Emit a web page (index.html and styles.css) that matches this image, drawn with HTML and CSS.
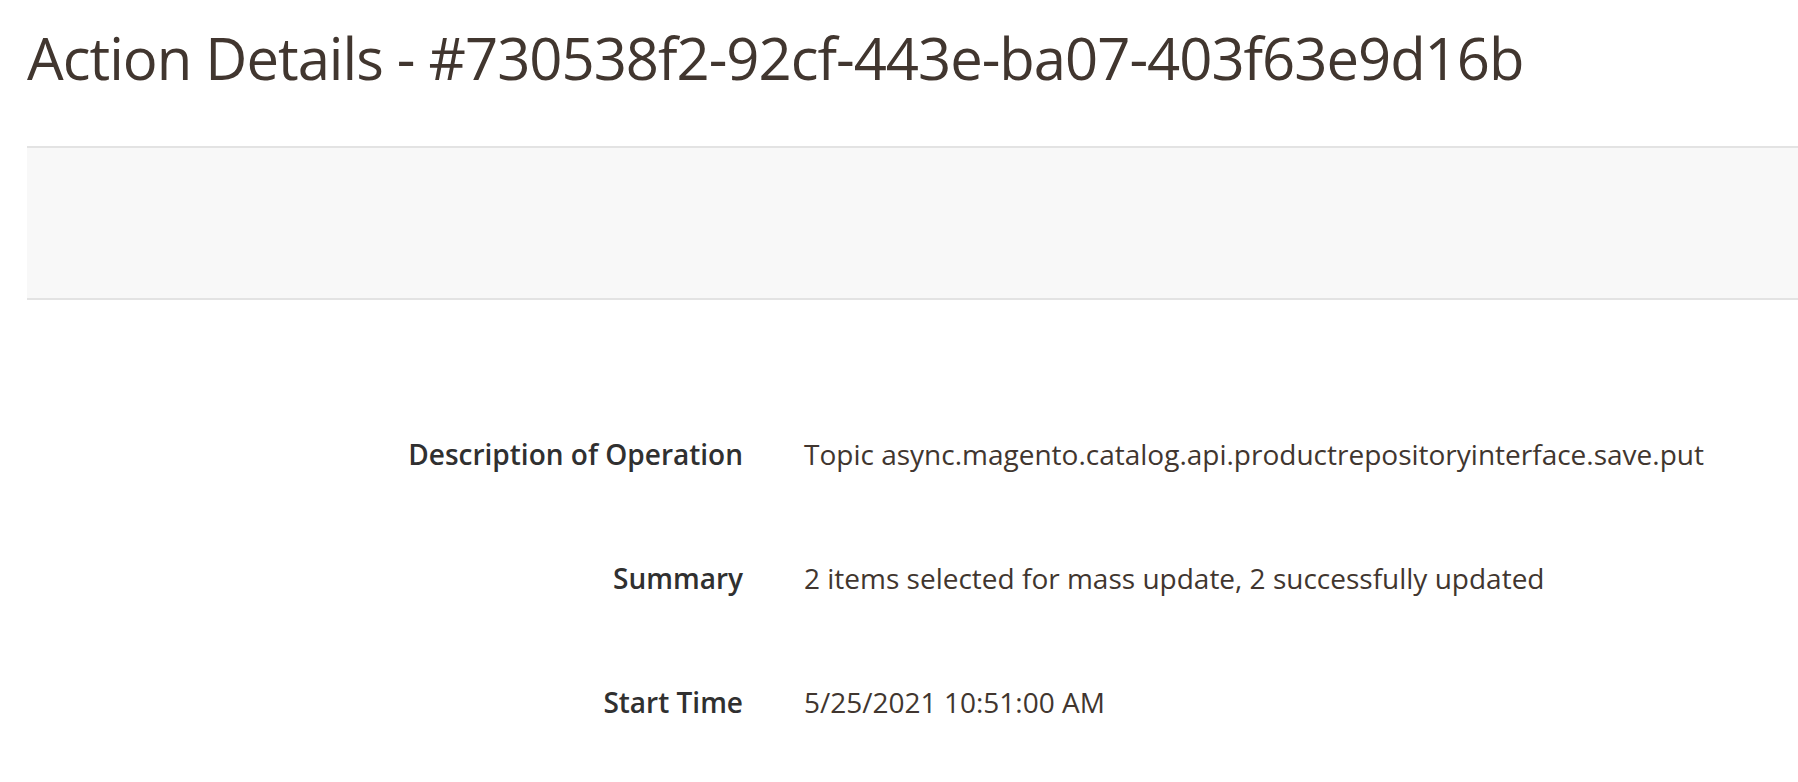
FILE: index.html
```html
<!DOCTYPE html>
<html>
<head>
<meta charset="utf-8">
<link rel="stylesheet" href="styles.css">
</head>
<body>
<div class="page">
  <h1 class="page-title">Action Details - #730538f2-92cf-443e-ba07-403f63e9d16b</h1>
  <div class="actions-bar"></div>
  <div class="details">
    <div class="row">
      <div class="label">Description of Operation</div>
      <div class="value">Topic async.magento.catalog.api.productrepositoryinterface.save.put</div>
    </div>
    <div class="row">
      <div class="label">Summary</div>
      <div class="value">2 items selected for mass update, 2 successfully updated</div>
    </div>
    <div class="row">
      <div class="label">Start Time</div>
      <div class="value">5/25/2021 10:51:00 AM</div>
    </div>
  </div>
</div>
</body>
</html>
```

FILE: styles.css
```css
html, body {
  margin: 0;
  padding: 0;
  background: #ffffff;
  overflow: hidden;
}
body {
  font-family: "Open Sans", "Noto Sans", sans-serif;
  color: #41362f;
}
.page {
  padding-left: 27px;
  padding-top: 18px;
}
.page-title {
  margin: 0;
  font-size: 58px;
  font-weight: 400;
  line-height: 79px;
  letter-spacing: -1px;
  color: #41362f;
}
.actions-bar {
  margin-top: 49px;
  height: 150px;
  background: #f8f8f8;
  border-top: 2px solid #e3e3e3;
  border-bottom: 2px solid #e3e3e3;
}
.details {
  padding-top: 135px;
  display: flex;
  flex-direction: column;
  gap: 86px;
}
.row {
  display: grid;
  grid-template-columns: 716px 1fr;
  column-gap: 61px;
  align-items: center;
  font-size: 28px;
  line-height: 38px;
}
.label {
  text-align: right;
  font-weight: 600;
  color: #303030;
}
.value {
  color: #41362f;
}
```
